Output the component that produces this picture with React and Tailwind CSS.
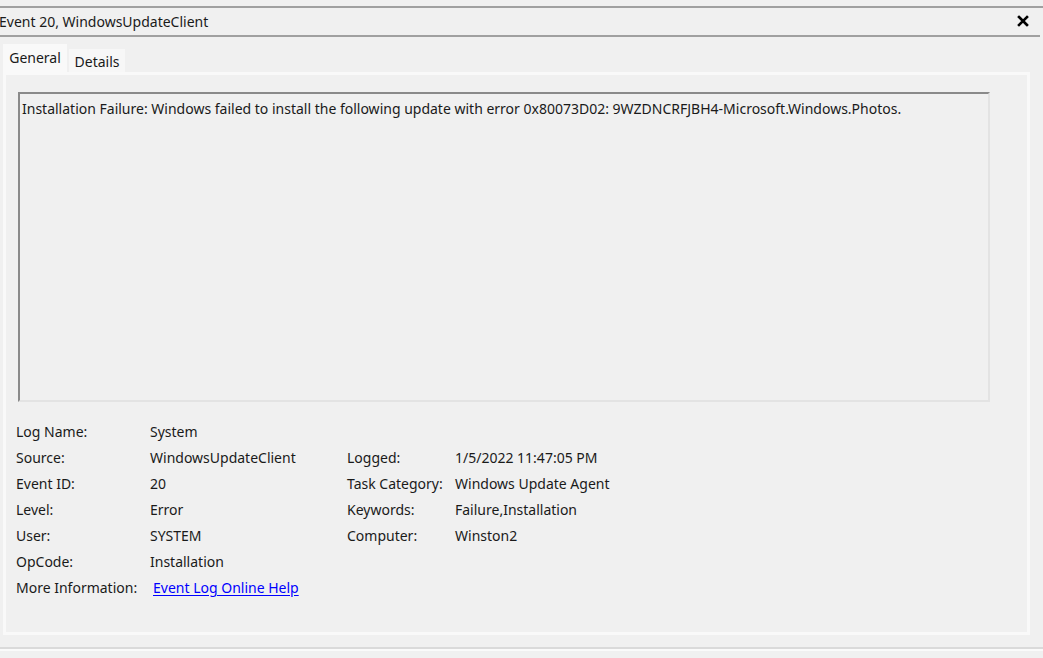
import React from 'react';

const rowsLeft = [
  ['Log Name:', 'System'],
  ['Source:', 'WindowsUpdateClient'],
  ['Event ID:', '20'],
  ['Level:', 'Error'],
  ['User:', 'SYSTEM'],
  ['OpCode:', 'Installation'],
];

const rowsRight = [
  ['Logged:', '1/5/2022 11:47:05 PM'],
  ['Task Category:', 'Windows Update Agent'],
  ['Keywords:', 'Failure,Installation'],
  ['Computer:', 'Winston2'],
];

const App = () => {
  return (
    <div className="w-[1043px] h-[658px] bg-[#f0f0f0] overflow-hidden text-[#1a1a1a] text-[14px]" style={{ fontFamily: '"Noto Sans", "Open Sans", sans-serif' }}>
      <div className="h-[6px]" />
      <div className="border-t-2 border-[#a0a0a0]" />
      <div className="flex items-center justify-between h-[27px] pr-[14px]">
        <span className="-ml-[1px]">Event 20, WindowsUpdateClient</span>
        <svg width="12" height="12" viewBox="0 0 12 12" className="mb-[1px]">
          <path d="M2 2 L10 10 M10 2 L2 10" stroke="#000" strokeWidth="2.6" strokeLinecap="square" />
        </svg>
      </div>
      <div className="border-t-2 border-[#a0a0a0] mr-[3px]" />

      <div className="pl-[3px] pr-[13px] pt-[7px]">
        <div className="flex items-end h-[28px]">
          <div className="h-[28px] w-[64px] bg-[#f9f9f9] flex items-center justify-center pb-[2px]">General</div>
          <div className="h-[23px] w-[56px] ml-[2px] bg-[#f7f7f7] flex items-center justify-center pt-[1px]">Details</div>
        </div>
        <div className="border-[3px] border-[#f9f9f9] bg-[#f0f0f0] h-[563px] pl-[12px] pr-[37px] pt-[17px]">
          <div className="h-[310px] border-t-2 border-l-2 border-[#8a8a8a] border-r-2 border-b-2 border-r-[#e3e3e3] border-b-[#e3e3e3] pl-[2px] pt-[4px]">
            Installation Failure: Windows failed to install the following update with error 0x80073D02: 9WZDNCRFJBH4-Microsoft.Windows.Photos.
          </div>
          <div className="flex mt-[16px] -ml-[2px]">
            <div className="flex flex-col">
              {rowsLeft.map(([k, v]) => (
                <div key={k} className="flex h-[26px] items-center">
                  <span className="w-[134px]">{k}</span>
                  <span className="w-[197px]">{v}</span>
                </div>
              ))}
              <div className="flex h-[26px] items-center">
                <span className="w-[137px]">More Information:</span>
                <span className="text-[#0000ff] underline underline-offset-2">Event Log Online Help</span>
              </div>
            </div>
            <div className="flex flex-col pt-[26px]">
              {rowsRight.map(([k, v]) => (
                <div key={k} className="flex h-[26px] items-center">
                  <span className="w-[108px]">{k}</span>
                  <span>{v}</span>
                </div>
              ))}
            </div>
          </div>
        </div>
      </div>
      <div className="mt-[12px] border-t-2 border-[#dadada]" />
      <div className="border-t-2 border-[#fafafa]" />
    </div>
  );
};

export default App;
